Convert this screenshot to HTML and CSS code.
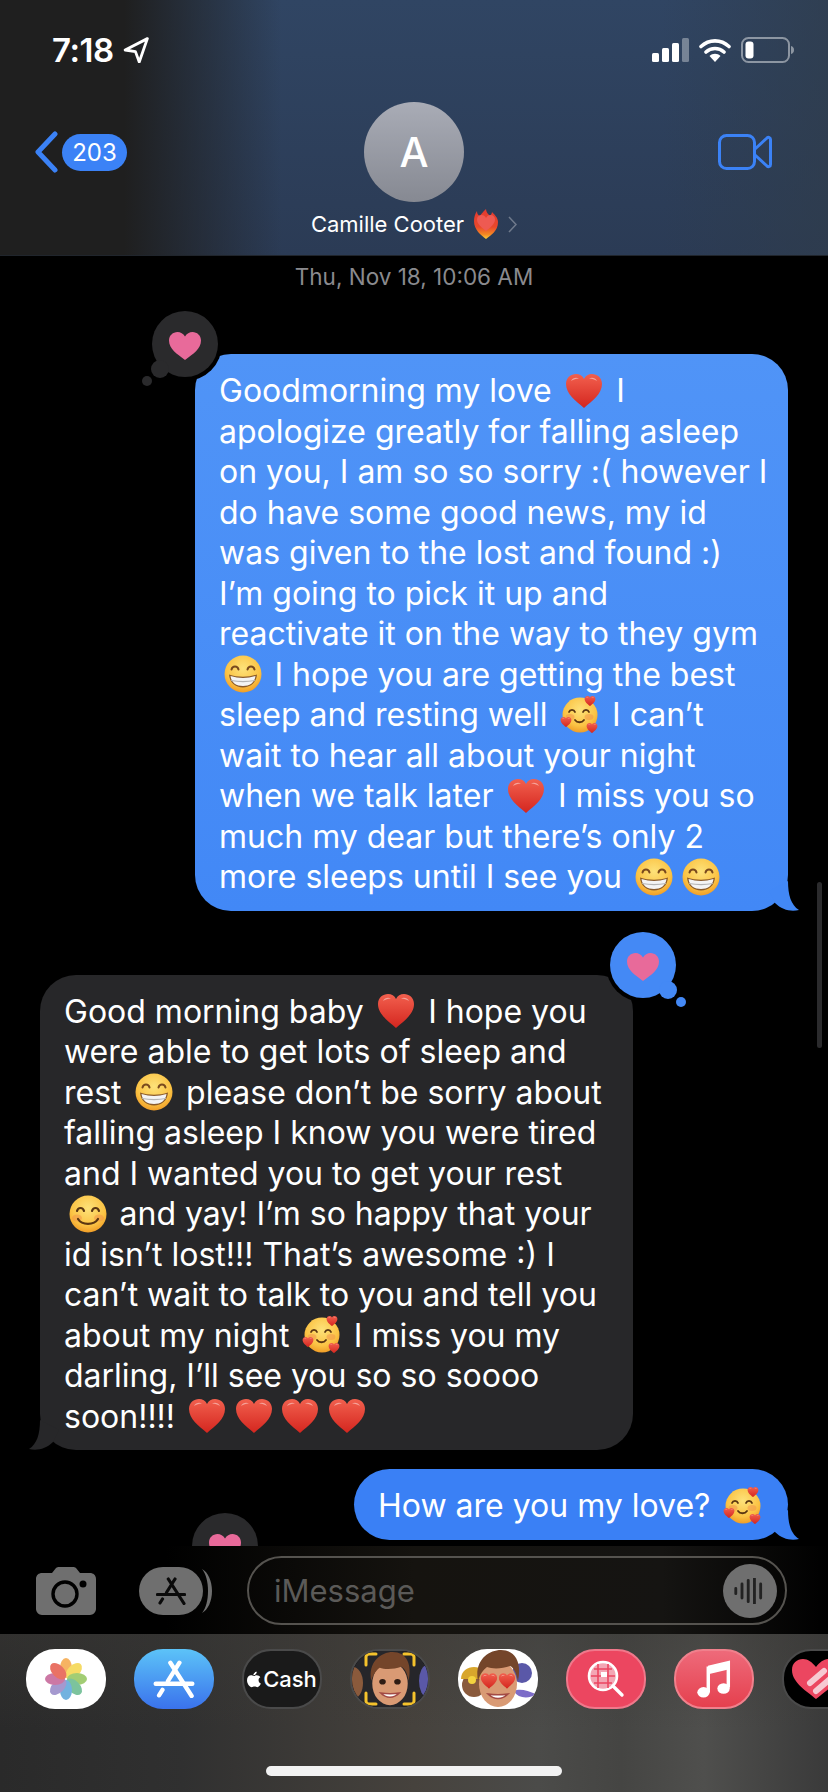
FILE: index.html
```html
<!doctype html>
<html lang="en">

	<head>
		<meta charset="UTF-8">
		<title>Camille Cooter</title>
		<link rel="stylesheet" href="styles.css">
	</head>

	<body>
		<!-- shared emoji and tapback drawings -->
		<svg class="defs" aria-hidden="true">
			<defs>
				<linearGradient id="g-heart" x1="0" y1="0" x2="0" y2="1">
					<stop offset="0" stop-color="#f2604e"/>
					<stop offset="1" stop-color="#d4261f"/>
				</linearGradient>
				<radialGradient id="g-face" cx="0.5" cy="0.35" r="0.7">
					<stop offset="0" stop-color="#fde27a"/>
					<stop offset="0.65" stop-color="#fbc344"/>
					<stop offset="1" stop-color="#ee9420"/>
				</radialGradient>
				<linearGradient id="g-flame" x1="0" y1="0" x2="0" y2="1">
					<stop offset="0" stop-color="#e23a30"/>
					<stop offset="0.6" stop-color="#e9482b"/>
					<stop offset="0.85" stop-color="#f58a23"/>
					<stop offset="1" stop-color="#fbcf3a"/>
				</linearGradient>
				<symbol id="e-heart" viewBox="0 0 40 40">
					<path d="M20 37C12 30 2 23 2 13 2 6.500 7 3 12 3c3.500 0 6.500 1.800 8 5 1.500-3.200 4.500-5 8-5 5 0 10 3.500 10 10 0 10-10 17-18 24z" fill="url(#g-heart)"/>
					<path d="M7 10c1.500-3 5-4 8-2.500-3 0-5.500 1-8 2.500zM25 7.500c3-1.500 6.500-.5 8 2.500-2.500-1.500-5-2.500-8-2.500z" fill="#fff" opacity=".45"/>
				</symbol>
				<symbol id="e-grin" viewBox="0 0 40 40">
					<circle cx="20" cy="20" r="18.500" fill="url(#g-face)"/>
					<path d="M8.500 15.500c1-4 6-4 7 0M24.500 15.500c1-4 6-4 7 0" fill="none" stroke="#7a4a1e" stroke-width="2" stroke-linecap="round"/>
					<path d="M6 20.500c9 3 19 3 28 0-.5 8-6.500 13-14 13S6.500 28.500 6 20.500z" fill="#8a5a2a"/>
					<path d="M7.500 22c8.500 2.500 16.500 2.500 25 0-1 7-6 10-12.500 10S8.500 29 7.500 22z" fill="#f4f4f4"/>
					<path d="M8 26.500c8 1.500 16 1.500 24 0" fill="none" stroke="#b5b5b5" stroke-width="1.200"/>
				</symbol>
				<symbol id="e-smile" viewBox="0 0 40 40">
					<circle cx="20" cy="20" r="18.500" fill="url(#g-face)"/>
					<ellipse cx="9" cy="24" rx="5" ry="3.500" fill="#f08a4a" opacity=".45"/>
					<ellipse cx="31" cy="24" rx="5" ry="3.500" fill="#f08a4a" opacity=".45"/>
					<path d="M9 17c1-4 6-4 7 0M24 17c1-4 6-4 7 0" fill="none" stroke="#5a3612" stroke-width="2.200" stroke-linecap="round"/>
					<path d="M10 25c4 6.500 16 6.500 20 0" fill="none" stroke="#5a3612" stroke-width="2.200" stroke-linecap="round"/>
				</symbol>
				<symbol id="e-love" viewBox="0 0 40 40">
					<circle cx="20" cy="20" r="17.500" fill="url(#g-face)"/>
					<ellipse cx="10" cy="22" rx="4.500" ry="3" fill="#f08a4a" opacity=".45"/>
					<ellipse cx="29" cy="22" rx="4.500" ry="3" fill="#f08a4a" opacity=".45"/>
					<path d="M9 17c1-2.800 5-2.800 6 0M23 17c1-2.800 5-2.800 6 0" fill="none" stroke="#5a3612" stroke-width="1.800" stroke-linecap="round"/>
					<path d="M15 25c2 3 7 3 9 0" fill="none" stroke="#5a3612" stroke-width="1.800" stroke-linecap="round"/>
					<use href="#e-heart" x="24" y="0" width="12" height="12"/>
					<use href="#e-heart" x="0" y="21" width="12" height="12"/>
					<use href="#e-heart" x="26" y="27" width="12" height="12"/>
				</symbol>
				<symbol id="tapback" viewBox="0 0 90 90">
					<circle cx="45" cy="39" r="37"/>
					<circle cx="20" cy="64" r="12"/>
					<circle cx="45" cy="39" r="33" fill="currentColor"/>
					<circle cx="20" cy="64" r="9" fill="currentColor"/>
					<circle cx="7" cy="76" r="5" fill="currentColor"/>
					<path d="M45 55C37 49 29 44 29 35.500 29 30.500 33 27 37.500 27c3 0 5.800 1.500 7.500 4.500 1.700-3 4.500-4.500 7.500-4.500 4.500 0 8.500 3.500 8.500 8.500C61 44 53 49 45 55z" fill="#e86a9a"/>
				</symbol>
				<symbol id="a-store" viewBox="0 0 30 28">
					<path d="M12.300 2L28 26.500M19 2L10.500 15.500M6.500 22L4 26" fill="none" stroke="currentColor" stroke-width="3.200" stroke-linecap="round"/>
					<path d="M1.500 17.500h27" fill="none" stroke="currentColor" stroke-width="3.200" stroke-linecap="round"/>
				</symbol>
				<symbol id="face-boy" viewBox="0 0 60 60">
					<ellipse cx="30" cy="35" rx="19" ry="23" fill="#d99a74"/>
					<path d="M10 32C6 12 20 1 33 1c14 0 21 12 17 31-2-9-4-13-8-15-8 3-18 3-23 1-4 3-7 7-9 14z" fill="#74452a"/>
					<ellipse cx="22" cy="33" rx="3.500" ry="3" fill="#2e1c14"/>
					<ellipse cx="38" cy="33" rx="3.500" ry="3" fill="#2e1c14"/>
					<path d="M20 45c6 6 14 6 20 0-6 1-14 1-20 0z" fill="#fff" stroke="#a34a44" stroke-width="1.500"/>
				</symbol>
			</defs>
		</svg>

		<div class="phone">
			<header class="header">
				<div class="status">
					<div class="clock">
						<span>7:18</span>
						<svg class="loc" viewBox="0 0 24 24"><path d="M22.500 1.500L2 12l9.500 1.500L15 23z" fill="none" stroke="#fff" stroke-width="2.600" stroke-linejoin="round"/></svg>
					</div>
					<div class="status-icons">
						<svg class="signal" viewBox="0 0 37 24">
							<rect x="0" y="15" width="7" height="9" rx="1.500" fill="#fff"/>
							<rect x="10" y="10" width="7" height="14" rx="1.500" fill="#fff"/>
							<rect x="20" y="5" width="7" height="19" rx="1.500" fill="#fff"/>
							<rect x="30" y="0" width="7" height="24" rx="1.500" fill="#fff" opacity=".35"/>
						</svg>
						<svg class="wifi" viewBox="0 0 32 24">
							<path d="M2 8.500c8-7.500 20-7.500 28 0M7 14c5-4.700 13-4.700 18 0" fill="none" stroke="#fff" stroke-width="3.600" stroke-linecap="round"/>
							<path d="M16 24l-5.500-6c3-3 8-3 11 0z" fill="#fff"/>
						</svg>
						<svg class="battery" viewBox="0 0 53 26">
							<rect x="1" y="1" width="47" height="24" rx="6.500" fill="none" stroke="#fff" stroke-opacity=".45" stroke-width="2"/>
							<rect x="4.500" y="4.500" width="8" height="17" rx="3" fill="#fff"/>
							<path d="M50 9c2 .5 3 2 3 4s-1 3.500-3 4z" fill="#fff" opacity=".45"/>
						</svg>
					</div>
				</div>
				<div class="nav">
					<div class="back">
						<svg class="chev" viewBox="0 0 24 42"><path d="M21 3L4 21l17 18" fill="none" stroke="#3b82f6" stroke-width="5" stroke-linecap="round" stroke-linejoin="round"/></svg>
						<span class="badge">203</span>
					</div>
					<div class="contact">
						<div class="avatar">A</div>
						<div class="name">
							<span>Camille Cooter</span>
							<svg class="fire" viewBox="0 0 26 30">
								<path d="M13 30C8 26 1 21 1 12 1 8 2 5 4 2c0 3 1 4 3 5 1-2 3-4 6-7 0 3 2 5 4 7 1-1 2-3 2-4 3 3 6 6 6 10 0 9-7 13-12 17z" fill="url(#g-flame)"/>
								<path d="M13 22C9 19 4 15 4 10.500c0-3 2-4.500 4.500-4.500 2 0 3.500 1 4.500 3 1-2 2.500-3 4.500-3 2.500 0 4.500 1.500 4.500 4.500C22 15 17 19 13 22z" fill="#ee5a52"/>
							</svg>
							<svg class="more" viewBox="0 0 9 17"><path d="M1 1l7 7.500L1 16" fill="none" stroke="#6f7a8c" stroke-width="1.500"/></svg>
						</div>
					</div>
					<div class="actions">
						<svg class="video" viewBox="0 0 54 36">
							<rect x="1.500" y="1.500" width="35" height="33" rx="7" fill="none" stroke="#3b82f6" stroke-width="3"/>
							<path d="M37 15L49 4c1.500-1.300 3.500-.5 3.500 1.500v25c0 2-2 2.800-3.500 1.500L37 21" fill="none" stroke="#3b82f6" stroke-width="3" stroke-linejoin="round"/>
						</svg>
					</div>
				</div>
			</header>

			<main class="thread">
				<div class="date">Thu, Nov 18, 10:06 AM</div>

				<div class="row row-out">
					<div class="bubble bubble-out">
						<svg class="tapback tapback-out"><use href="#tapback"/></svg>
						Goodmorning my love <svg class="emoji"><use href="#e-heart"/></svg> I<br>
						apologize greatly for falling asleep<br>
						on you, I am so so sorry :( however I<br>
						do have some good news, my id<br>
						was given to the lost and found :)<br>
						I’m going to pick it up and<br>
						reactivate it on the way to they gym<br>
						<svg class="emoji"><use href="#e-grin"/></svg> I hope you are getting the best<br>
						sleep and resting well <svg class="emoji"><use href="#e-love"/></svg> I can’t<br>
						wait to hear all about your night<br>
						when we talk later <svg class="emoji"><use href="#e-heart"/></svg> I miss you so<br>
						much my dear but there’s only 2<br>
						more sleeps until I see you <svg class="emoji"><use href="#e-grin"/></svg><svg class="emoji"><use href="#e-grin"/></svg>
						<svg class="tail tail-out" viewBox="0 0 30 30"><path d="M19 0C19 14 22 24 30 29 22 31 13 29 6 22L0 10z"/></svg>
					</div>
				</div>

				<div class="row row-in">
					<div class="bubble bubble-in">
						<svg class="tapback tapback-in"><use href="#tapback"/></svg>
						Good morning baby <svg class="emoji"><use href="#e-heart"/></svg> I hope you<br>
						were able to get lots of sleep and<br>
						rest <svg class="emoji"><use href="#e-grin"/></svg> please don’t be sorry about<br>
						falling asleep I know you were tired<br>
						and I wanted you to get your rest<br>
						<svg class="emoji"><use href="#e-smile"/></svg> and yay! I’m so happy that your<br>
						id isn’t lost!!! That’s awesome :) I<br>
						can’t wait to talk to you and tell you<br>
						about my night <svg class="emoji"><use href="#e-love"/></svg> I miss you my<br>
						darling, I’ll see you so so soooo<br>
						soon!!!! <svg class="emoji"><use href="#e-heart"/></svg><svg class="emoji"><use href="#e-heart"/></svg><svg class="emoji"><use href="#e-heart"/></svg><svg class="emoji"><use href="#e-heart"/></svg>
						<svg class="tail tail-in" viewBox="0 0 30 30"><path d="M19 0C19 14 22 24 30 29 22 31 13 29 6 22L0 10z"/></svg>
					</div>
				</div>

				<div class="row row-out row-tight">
					<div class="bubble bubble-last">
						How are you my love? <svg class="emoji"><use href="#e-love"/></svg>
						<svg class="tail tail-last" viewBox="0 0 30 30"><path d="M19 0C19 14 22 24 30 29 22 31 13 29 6 22L0 10z"/></svg>
					</div>
				</div>

				<svg class="tapback tapback-next"><use href="#tapback"/></svg>
				<div class="scrollbar"></div>
			</main>

			<div class="inputbar">
				<svg class="camera" viewBox="0 0 60 48">
					<path d="M6 6h10l4-5c1-1 2-1 3-1h14c1 0 2 0 3 1l4 5h10c3 0 6 2 6 6v30c0 3-3 6-6 6H6c-3 0-6-3-6-6V12c0-4 3-6 6-6z" fill="#6f6f6f"/>
					<circle cx="29" cy="27" r="12" fill="none" stroke="#000" stroke-width="3.400"/>
					<circle cx="47" cy="17" r="3.500" fill="#000"/>
				</svg>
				<div class="store-btn">
					<div class="store-pill"><svg class="store-a"><use href="#a-store"/></svg></div>
					<svg class="store-arc" viewBox="0 0 10 46"><path d="M0 1C6 4 10 13 10 23 10 33 6 42 0 45 4 40 6 32 6 23 6 14 4 6 0 1z" fill="#6f6f6f"/></svg>
				</div>
				<div class="field">
					<span class="placeholder">iMessage</span>
					<div class="mic">
						<svg viewBox="0 0 36 28"><path d="M2 11v6M9 6v16M16 2v24M23 0v28M30 6v16" fill="none" stroke="#222" stroke-width="3.200" stroke-linecap="round"/></svg>
					</div>
				</div>
			</div>

			<div class="dock">
				<div class="apps">
					<div class="app app-photos">
						<svg viewBox="0 0 44 44">
							<g opacity=".8">
								<ellipse cx="22" cy="11" rx="6" ry="10" fill="#f5a13c"/>
								<ellipse cx="22" cy="11" rx="6" ry="10" fill="#f4d33f" transform="rotate(45 22 22)"/>
								<ellipse cx="22" cy="11" rx="6" ry="10" fill="#8cc152" transform="rotate(90 22 22)"/>
								<ellipse cx="22" cy="11" rx="6" ry="10" fill="#5cb585" transform="rotate(135 22 22)"/>
								<ellipse cx="22" cy="11" rx="6" ry="10" fill="#4f9fd8" transform="rotate(180 22 22)"/>
								<ellipse cx="22" cy="11" rx="6" ry="10" fill="#8f80c4" transform="rotate(225 22 22)"/>
								<ellipse cx="22" cy="11" rx="6" ry="10" fill="#c0578f" transform="rotate(270 22 22)"/>
								<ellipse cx="22" cy="11" rx="6" ry="10" fill="#e4503f" transform="rotate(315 22 22)"/>
							</g>
						</svg>
					</div>
					<div class="app app-store"><svg class="store-big"><use href="#a-store"/></svg></div>
					<div class="app app-cash">
						<svg class="apple" viewBox="0 0 20 24"><path d="M14 1c0 3-2.500 5-5 5 0-3 2.500-5 5-5zM9.500 7c1.500 0 2.500-1 4.500-1 2 0 3.800 1 5 2.800-3.800 2.200-3 7.500.800 9-1.200 2.800-3 5.200-5 5.200-1.500 0-2.300-1-4-1s-2.700 1-4 1C3.500 23 0 17.500 0 13c0-4.500 3-7 5.800-7 1.500 0 2.700 1 3.700 1z" fill="#fff"/></svg>
						<span>Cash</span>
					</div>
					<div class="app app-memoji">
						<svg viewBox="0 0 80 60">
							<rect width="80" height="60" fill="#26262a"/>
							<ellipse cx="3" cy="34" rx="10" ry="16" fill="#8a5a3c"/>
							<ellipse cx="77" cy="32" rx="8" ry="16" fill="#5a58a8"/>
							<use href="#face-boy" x="12" y="2" width="56" height="56"/>
							<path d="M16 16V8c0-2 1-3 3-3h7M54 5h7c2 0 3 1 3 3v8M64 44v8c0 2-1 3-3 3h-7M26 55h-7c-2 0-3-1-3-3v-8" fill="none" stroke="#f4c22c" stroke-width="3" stroke-linecap="round"/>
						</svg>
					</div>
					<div class="app app-stickers">
						<svg viewBox="0 0 80 60">
							<circle cx="16" cy="36" r="12" fill="#8a5a3c"/>
							<path d="M3 30C3 14 29 14 29 30z" fill="#d8a62c"/>
							<circle cx="14" cy="31" r="4" fill="#f4d33f"/>
							<circle cx="64" cy="24" r="10" fill="#5a58a8"/>
							<path d="M56 42c6-3 14 0 22 3-6 5-18 5-22-3z" fill="#7d6cc8"/>
							<use href="#face-boy" x="10" y="0" width="60" height="60"/>
							<use href="#e-heart" x="22" y="23" width="18" height="18"/>
							<use href="#e-heart" x="40" y="23" width="18" height="18"/>
						</svg>
					</div>
					<div class="app app-search">
						<svg viewBox="0 0 44 44">
							<circle cx="19" cy="19" r="14" fill="#f3a6b4" stroke="#fff" stroke-width="2.600"/>
							<path d="M10 12h18M7 19h24M10 26h18M14 7v24M24 7v24" stroke="#ec4660" stroke-width="1.600"/>
							<rect x="17" y="15" width="6" height="5" fill="#fff"/>
							<path d="M29 29l9 9" stroke="#fff" stroke-width="3.400" stroke-linecap="round"/>
						</svg>
					</div>
					<div class="app app-music">
						<svg viewBox="0 0 44 44">
							<path d="M16 10L37 5v26" fill="none" stroke="#fff" stroke-width="3.600"/>
							<path d="M16 9v27" fill="none" stroke="#fff" stroke-width="3.600"/>
							<path d="M16 10L37 5v7L16 17z" fill="#fff"/>
							<ellipse cx="11" cy="36" rx="6.500" ry="5.500" fill="#fff"/>
							<ellipse cx="32" cy="32" rx="6.500" ry="5.500" fill="#fff"/>
						</svg>
					</div>
					<div class="app app-heart">
						<svg viewBox="0 0 80 60">
							<path d="M34 50C26 43 10 34 10 21 10 14 15 10 21 10c5 0 9 3 13 8 4-5 8-8 13-8 6 0 11 4 11 11 0 13-16 22-24 29z" fill="#ec4660"/>
							<path d="M28 34l14-12M34 42l14-12" stroke="#f6c9d2" stroke-width="6" stroke-linecap="round"/>
						</svg>
					</div>
				</div>
				<div class="home-bar"></div>
			</div>
		</div>
	</body>

</html>
```

FILE: styles.css
```css
body {
	margin: 0;
	background: #000;
	font-family: Inter, "Noto Sans", sans-serif;
	color: #fff;
}

.defs {
	position: absolute;
	width: 0;
	height: 0;
}

.phone {
	width: 828px;
	height: 1792px;
	display: flex;
	flex-direction: column;
	overflow: hidden;
}

/* header */
.header {
	height: 256px;
	flex: none;
	box-sizing: border-box;
	border-bottom: 1px solid #20252c;
	background:
		linear-gradient(90deg, #1f1f1f 0, #1f1f1f 15%, rgba(31, 31, 31, 0) 34%),
		linear-gradient(90deg, rgba(47, 60, 75, 0) 80%, rgba(47, 60, 75, 0.7) 100%),
		linear-gradient(180deg, #304563 0, #2b3b55 100%);
}

.status {
	height: 102px;
	box-sizing: border-box;
	padding: 30px 34px 0 52px;
	display: flex;
	justify-content: space-between;
	align-items: flex-start;
}

.clock {
	display: flex;
	align-items: center;
	gap: 9px;
	height: 40px;
	font-size: 33px;
	font-weight: 600;
	letter-spacing: -0.5px;
}

.loc {
	width: 26px;
	height: 26px;
}

.status-icons {
	display: flex;
	align-items: center;
	gap: 10px;
	height: 40px;
}

.signal {
	width: 37px;
	height: 24px;
}

.wifi {
	width: 32px;
	height: 24px;
}

.battery {
	width: 53px;
	height: 26px;
}

.nav {
	display: grid;
	grid-template-columns: 1fr auto 1fr;
	padding: 0 34px;
}

.back {
	display: flex;
	align-items: center;
	gap: 4px;
	height: 100px;
}

.chev {
	width: 24px;
	height: 42px;
}

.badge {
	width: 65px;
	height: 37px;
	line-height: 37px;
	border-radius: 19px;
	background: #3b82f6;
	font-size: 24px;
	text-align: center;
}

.contact {
	display: flex;
	flex-direction: column;
	align-items: center;
}

.avatar {
	width: 100px;
	height: 100px;
	line-height: 100px;
	border-radius: 50%;
	background: linear-gradient(180deg, #a9acb6, #868992);
	font-size: 41px;
	font-weight: 500;
	text-align: center;
}

.name {
	display: flex;
	align-items: center;
	gap: 9px;
	height: 38px;
	margin-top: 3px;
	font-size: 22px;
	white-space: nowrap;
}

.fire {
	width: 26px;
	height: 30px;
}

.more {
	width: 9px;
	height: 17px;
}

.actions {
	display: flex;
	justify-content: flex-end;
	align-items: center;
	height: 100px;
	padding-right: 22px;
}

.video {
	width: 54px;
	height: 36px;
}

/* messages */
.thread {
	height: 1290px;
	flex: none;
	position: relative;
	overflow: hidden;
	padding-top: 8px;
	box-sizing: border-box;
}

.date {
	height: 26px;
	line-height: 26px;
	margin-bottom: 64px;
	text-align: center;
	font-size: 22.500px;
	color: #8a8a8e;
}

.row {
	display: flex;
	padding: 0 40px;
	margin-bottom: 64px;
}

.row-out {
	justify-content: flex-end;
}

.row-tight {
	margin-top: -45px;
}

.bubble {
	position: relative;
	box-sizing: border-box;
	padding: 17px 24px 13px;
	border-radius: 36px;
	font-size: 32px;
	line-height: 40.500px;
	white-space: nowrap;
}

.bubble-out {
	width: 593px;
	background: linear-gradient(180deg, #5094f7, #4288f6);
	color: #fff;
}

.bubble-in {
	width: 593px;
	background: #272729;
}

.bubble-last {
	width: 434px;
	background: #3a80f5;
}

.emoji {
	width: 40px;
	height: 40px;
	margin: -3px 3px -3px 3.500px;
	vertical-align: -5.500px;
}

.tail {
	position: absolute;
	right: -11px;
	bottom: 0;
	width: 30px;
	height: 30px;
}

.tail-out {
	fill: #4288f6;
}

.tail-last {
	fill: #3a80f5;
}

.tail-in {
	right: auto;
	left: -11px;
	transform: scaleX(-1);
	fill: #272729;
}

.tapback {
	position: absolute;
	width: 90px;
	height: 90px;
	z-index: 2;
	fill: #000;
}

.tapback-out {
	left: -55px;
	top: -49px;
	color: #2a2a2c;
}

.tapback-in {
	right: -55px;
	top: -49px;
	transform: scaleX(-1);
	color: #4489f5;
}

.tapback-next {
	left: 180px;
	bottom: -51px;
	color: #2a2a2c;
}

.scrollbar {
	position: absolute;
	right: 6px;
	top: 626px;
	width: 5px;
	height: 166px;
	border-radius: 3px;
	background: #2b2b2d;
}

/* input */
.inputbar {
	height: 88px;
	flex: none;
	box-sizing: border-box;
	padding: 10px 41px 9px 36px;
	display: flex;
	align-items: center;
	background: linear-gradient(90deg, #000 0, #000 20%, #15130f 50%, #151412 80%, #000 100%);
}

.camera {
	width: 60px;
	height: 48px;
	margin-right: 43px;
}

.store-btn {
	display: flex;
	align-items: center;
	margin-right: 35px;
}

.store-pill {
	width: 64px;
	height: 48px;
	border-radius: 24px;
	background: #6f6f6f;
	display: flex;
	align-items: center;
	justify-content: center;
}

.store-arc {
	width: 10px;
	height: 46px;
	margin-left: -1px;
}

.store-a {
	width: 30px;
	height: 28px;
	color: #0a0a0a;
}

.field {
	flex: 1;
	height: 69px;
	box-sizing: border-box;
	border: 2px solid #55534f;
	border-radius: 35px;
	padding: 0 8px 0 25px;
	display: flex;
	align-items: center;
	justify-content: space-between;
}

.placeholder {
	font-size: 31px;
	color: #5b5a58;
}

.mic {
	width: 54px;
	height: 54px;
	border-radius: 50%;
	background: #6f6f6f;
	display: flex;
	align-items: center;
	justify-content: center;
}

.mic svg {
	width: 32px;
	height: 26px;
}

/* app drawer */
.dock {
	flex: 1;
	min-height: 0;
	position: relative;
	background:
		linear-gradient(180deg, rgba(60, 58, 54, 0.4), rgba(40, 38, 36, 0) 60%),
		linear-gradient(90deg, #2a2a2a 0, #303030 22%, #46423d 50%, #4b4b49 65%, #454543 75%, #4f4f4d 85%, #3a3a3a 100%);
	overflow: hidden;
}

.apps {
	display: flex;
	gap: 28px;
	padding: 15px 0 0 26px;
}

.app {
	flex: none;
	width: 80px;
	height: 60px;
	border-radius: 29px;
	overflow: hidden;
	display: flex;
	align-items: center;
	justify-content: center;
	box-sizing: border-box;
}

.app svg {
	display: block;
}

.app-photos {
	background: #fff;
}

.app-photos svg {
	width: 44px;
	height: 44px;
}

.app-store {
	background: linear-gradient(180deg, #5cc3f8, #3a72ec);
}

.store-big {
	width: 42px;
	height: 38px;
	color: #fff;
}

.app-cash {
	background: #1a1a1a;
	border: 2px solid #4a4a4a;
	gap: 2px;
	font-size: 22px;
	font-weight: 500;
}

.apple {
	width: 14px;
	height: 17px;
}

.app-memoji,
.app-heart {
	border: 2px solid #4a4a4a;
	background: #000;
}

.app-memoji svg,
.app-stickers svg,
.app-heart svg {
	width: 80px;
	height: 60px;
	flex: none;
}

.app-stickers {
	background: #fff;
}

.app-search {
	background: #ec4660;
	border: 2px solid #f0788b;
}

.app-search svg {
	width: 44px;
	height: 44px;
}

.app-music {
	background: linear-gradient(180deg, #ee6a7a, #e5404e);
	border: 2px solid #f0808c;
}

.app-music svg {
	width: 42px;
	height: 42px;
}

.home-bar {
	position: absolute;
	left: 266px;
	bottom: 16px;
	width: 296px;
	height: 10px;
	border-radius: 5px;
	background: #f2f2f2;
}
```
